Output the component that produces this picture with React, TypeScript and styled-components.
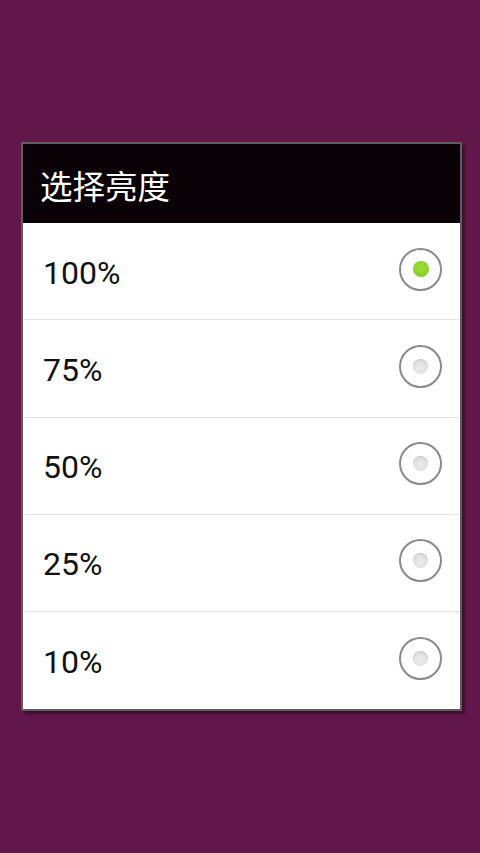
import styled, { createGlobalStyle } from "styled-components";

const GlobalStyle = createGlobalStyle`
  html, body {
    margin: 0;
    padding: 0;
    background: #62174a;
  }
  * { box-sizing: border-box; }
`;

const Screen = styled.div`
  width: 480px;
  height: 853px;
  display: flex;
  align-items: center;
  padding-left: 21px;
  background: #62174a;
`;

const Dialog = styled.div`
  width: 441px;
  display: flex;
  flex-direction: column;
  border: 2px solid #5e5e5e;
  box-shadow: 3px 3px 3px rgba(0, 0, 0, 0.4);
  background: #fff;
`;

const Title = styled.div`
  height: 79px;
  display: flex;
  align-items: center;
  padding-left: 17px;
  padding-top: 2px;
  background: #0b0207;
  color: #fff;
  font-family: "Noto Sans CJK SC", "Noto Sans", sans-serif;
  font-size: 32.5px;
`;

const Option = styled.div<{ last?: boolean }>`
  height: ${(p) => (p.last ? 97 : 97.3)}px;
  display: flex;
  align-items: center;
  justify-content: space-between;
  padding: 0 18px 0 20px;
  border-bottom: ${(p) => (p.last ? "none" : "1px solid #e3e3e3")};
`;

const Label = styled.span`
  font-family: Roboto, "Liberation Sans", sans-serif;
  font-size: 32px;
  color: #111;
  padding-top: 3px;
`;

const Radio = styled.div`
  width: 43px;
  height: 43px;
  border-radius: 50%;
  border: 2.5px solid #8a8a8a;
  display: flex;
  align-items: center;
  justify-content: center;
  margin-bottom: 4px;
`;

const Dot = styled.div<{ checked?: boolean }>`
  width: ${(p) => (p.checked ? 16 : 15)}px;
  height: ${(p) => (p.checked ? 16 : 15)}px;
  border-radius: 50%;
  background: ${(p) =>
    p.checked
      ? "radial-gradient(circle at 50% 40%, #9be03a, #7cc81e)"
      : "radial-gradient(circle at 50% 60%, #ececec, #d6d6d6)"};
  box-shadow: ${(p) => (p.checked ? "none" : "inset 0 1px 1px rgba(0,0,0,0.12)")};
`;

const options = ["100%", "75%", "50%", "25%", "10%"];

export default function App() {
  return (
    <>
      <GlobalStyle />
      <Screen>
        <Dialog>
          <Title>选择亮度</Title>
          {options.map((o, i) => (
            <Option key={o} last={i === options.length - 1}>
              <Label>{o}</Label>
              <Radio>
                <Dot checked={i === 0} />
              </Radio>
            </Option>
          ))}
        </Dialog>
      </Screen>
    </>
  );
}
